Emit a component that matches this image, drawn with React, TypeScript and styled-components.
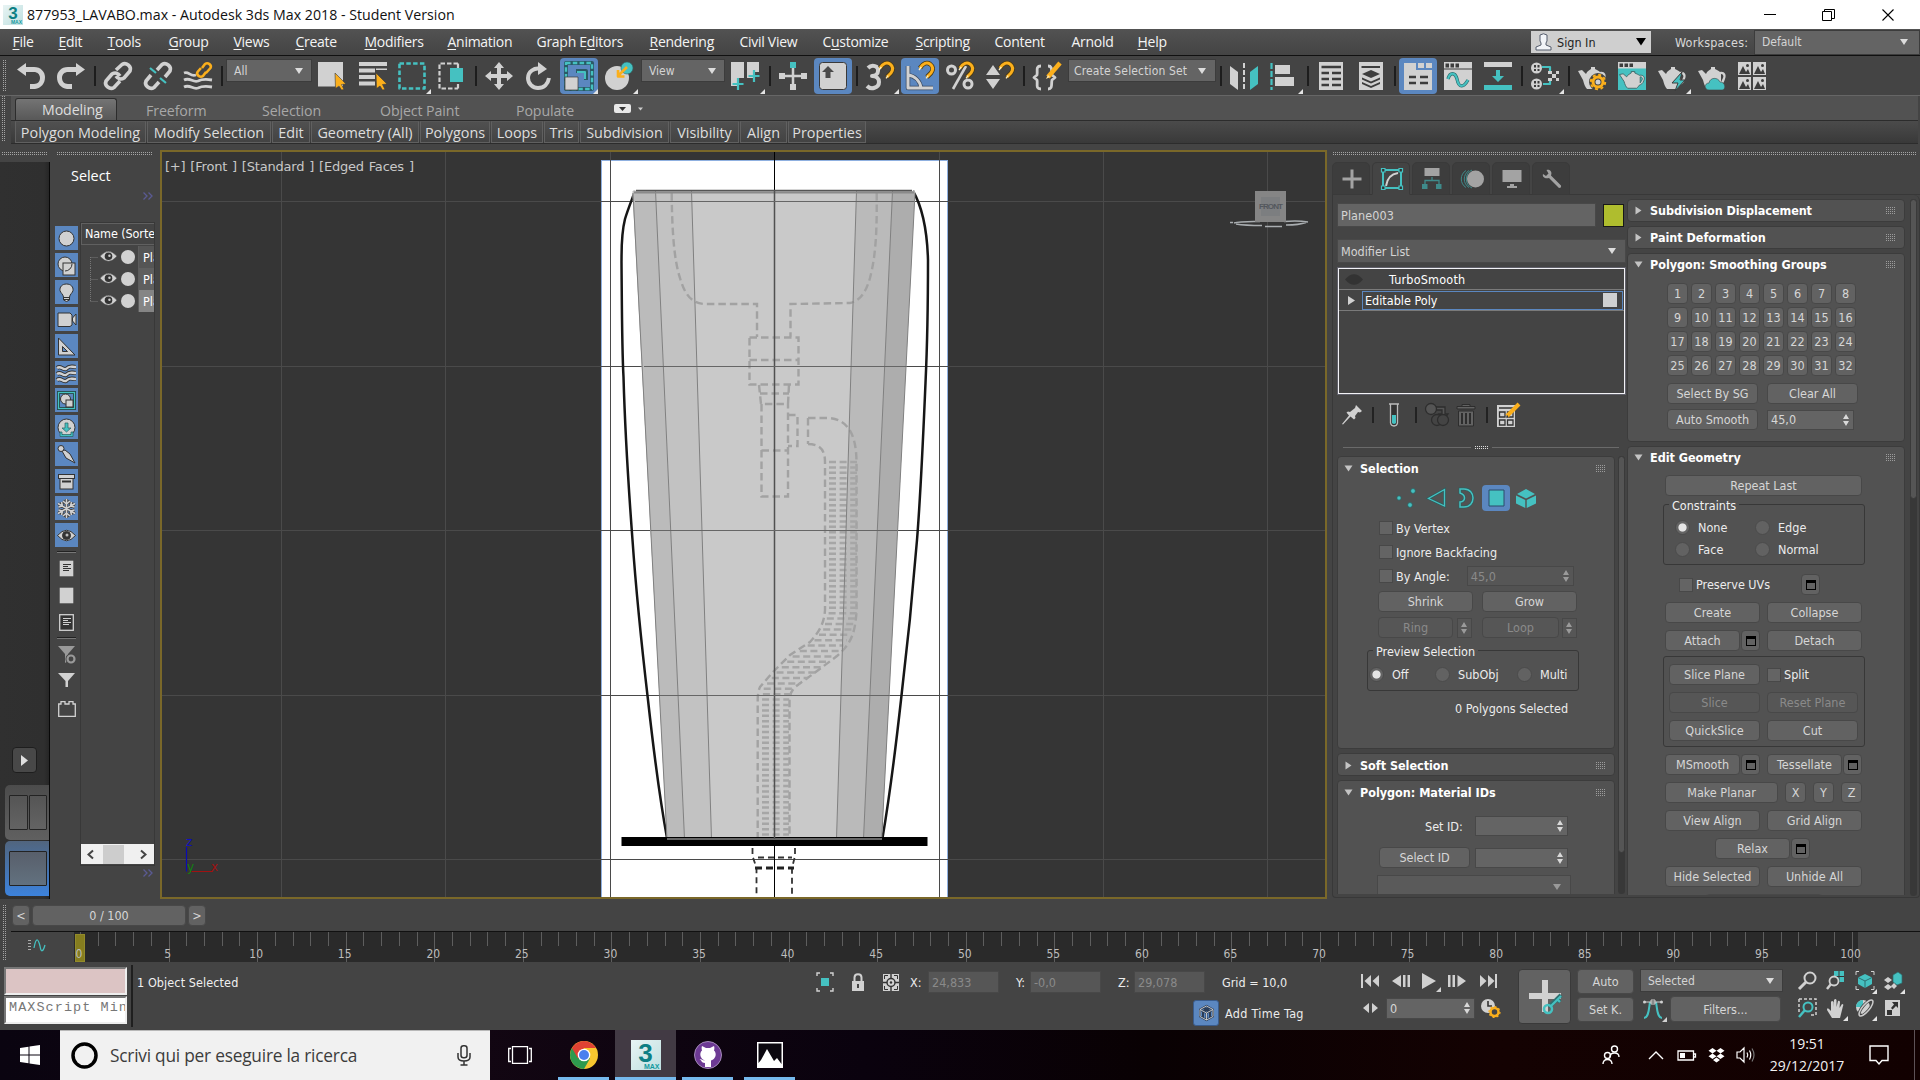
import React from "react";
import styled, { createGlobalStyle, css } from "styled-components";

const ui = `"DejaVu Sans Condensed", "DejaVu Sans", "Liberation Sans", sans-serif`;
const segoe = `"Open Sans", "Noto Sans", sans-serif`;
const light = "#d1d1d1";
const teal = "#45c1c1";
const orange = "#fbaf1c";
const blue = "#5b87c0";

const Global = createGlobalStyle`
  * { box-sizing: border-box; }
  html, body { margin: 0; padding: 0; background: #444; overflow: hidden; }
  body { font-family: ${ui}; font-stretch: condensed; font-size: 12.5px; color: #e6e6e6; }
`;

/* ---------- shared primitives ---------- */
const Window = styled.div`
  width: 1920px; height: 1080px; display: flex; flex-direction: column; background: #444; overflow: hidden;
`;
const Svg = styled.svg<{ $ml?: number; $mt?: number }>`
  display: block; flex: none; overflow: visible; margin-left: ${p => p.$ml ?? 0}px; margin-top: ${p => p.$mt ?? 0}px;
`;
const Text = styled.span<{ $w?: number; $ml?: number; $c?: string; $fs?: number; $ls?: number; $b?: boolean; $segoe?: boolean }>`
  flex: none; white-space: pre; display: block;
  width: ${p => (p.$w ? p.$w + "px" : "auto")};
  margin-left: ${p => p.$ml ?? 0}px;
  color: ${p => p.$c ?? "#ececec"};
  font-size: ${p => p.$fs ?? 12.5}px;
  letter-spacing: ${p => p.$ls ?? 0}px;
  font-weight: ${p => (p.$b ? 700 : 400)};
  ${p => p.$segoe && css`font-family: ${segoe}; font-stretch: normal;`}
`;
const Spacer = styled.div`flex: 1;`;
const Line = styled.div<{ $h: number; $mt?: number; $pl?: number; $top?: boolean }>`
  display: flex; align-items: ${p => (p.$top ? "flex-start" : "center")}; flex: none;
  height: ${p => p.$h}px; margin-top: ${p => p.$mt ?? 0}px; padding-left: ${p => p.$pl ?? 0}px;
`;
const Button = styled.div<{ $w: number; $h?: number; $ml?: number; $off?: boolean; $fs?: number }>`
  flex: none; display: flex; align-items: center; justify-content: center; white-space: pre;
  width: ${p => p.$w}px; height: ${p => p.$h ?? 21}px; margin-left: ${p => p.$ml ?? 0}px;
  border: 1px solid #484848; border-radius: 4px; font-size: ${p => p.$fs ?? 12.5}px;
  background: ${p => (p.$off ? "#565656" : "#626262")}; color: ${p => (p.$off ? "#8a8a8a" : "#d6d6d6")};
`;
const Field = styled.div<{ $w: number; $h?: number; $ml?: number; $off?: boolean }>`
  flex: none; display: flex; align-items: center; justify-content: space-between; white-space: pre;
  width: ${p => p.$w}px; height: ${p => p.$h ?? 20}px; margin-left: ${p => p.$ml ?? 0}px; padding: 0 4px 0 3px;
  border: 1px solid #484848; background: ${p => (p.$off ? "#565656" : "#646464")}; color: ${p => (p.$off ? "#8a8a8a" : "#d6d6d6")};
`;
const Drop = styled.div<{ $w: number; $h?: number; $ml?: number; $off?: boolean; $pr?: number; $fs?: number; $ls?: number }>`
  flex: none; display: flex; align-items: center; justify-content: space-between; white-space: pre;
  width: ${p => p.$w}px; height: ${p => p.$h ?? 23}px; margin-left: ${p => p.$ml ?? 0}px; padding: 0 ${p => p.$pr ?? 8}px 0 7px;
  border: 1px solid ${p => (p.$off ? "#484848" : "#3c3c3c")}; background: ${p => (p.$off ? "#5a5a5a" : "#646464")}; color: #d4d4d4;
  font-size: ${p => p.$fs ?? 12}px; letter-spacing: ${p => p.$ls ?? 0}px;
`;
const BarDrop = styled(Drop)`align-self: flex-start; margin-top: 3px;`;
const Check = styled.div<{ $ml?: number }>`
  flex: none; width: 14px; height: 14px; margin-left: ${p => p.$ml ?? 0}px; background: #646464; border: 1px solid #484848;
`;
const RadioDot = styled.div<{ $ml?: number; $on?: boolean }>`
  flex: none; width: 15px; height: 15px; border-radius: 50%; margin-left: ${p => p.$ml ?? 0}px;
  border: 1px solid #4b4b4b; background: ${p => (p.$on ? "radial-gradient(circle, #e4e4e4 0 3.6px, #646464 4.6px)" : "#626262")};
`;
const GroupBox = styled.div<{ $ml: number; $mt: number; $w: number; $h: number }>`
  flex: none; position: relative; margin: ${p => p.$mt}px 0 0 ${p => p.$ml}px; width: ${p => p.$w}px; height: ${p => p.$h}px;
  border: 1px solid #383838; border-radius: 3px;
`;
const Legend = styled.span`
  position: absolute; top: -7px; left: 5px; padding: 0 3px; background: #525252; line-height: 15px; white-space: pre; color: #f0f0f0;
`;

const Down = ({ c = "#dcdcdc", s = 8 }: { c?: string; s?: number }) => (
  <Svg width={s} height={s * 0.75} viewBox="0 0 8 6"><path d="M0 0H8L4 6Z" fill={c} /></Svg>
);
const Spin = ({ c = "#d8d8d8" }: { c?: string }) => (
  <Svg width="6" height="12" viewBox="0 0 6 12"><path d="M0 5L3 0L6 5ZM0 7H6L3 12Z" fill={c} /></Svg>
);
const Flyout = styled.i`
  position: absolute; right: -5px; bottom: -4px; width: 0; height: 0; border-left: 5px solid transparent; border-bottom: 5px solid #e4e4e4;
`;

/* ---------- title bar ---------- */
const TitleBar = styled.div`
  height: 29px; flex: none; background: #fff; display: flex; align-items: center; padding-left: 3px; color: #111;
`;
const TitleBarEnd = styled.div`margin-left: auto; display: flex; align-items: center; padding-right: 26px;`;
const Badge = styled.div<{ $s: number; $f: number }>`
  width: ${p => p.$s}px; height: ${p => p.$s}px; flex: none; position: relative; background: linear-gradient(135deg, #e8f4f4, #bfdfe0);
  color: #0d7f84; font: 700 ${p => p.$f}px/1 "Liberation Sans", sans-serif; text-align: center;
`;
const BadgeTag = styled.span<{ $f: number }>`
  position: absolute; right: 1px; bottom: 0; font-size: ${p => p.$f}px; line-height: 1; color: #129a9f;
`;

/* ---------- menu ---------- */
const MenuBar = styled.div`
  height: 27px; flex: none; display: flex; align-items: center; padding-left: 12.5px; background: linear-gradient(#525252, #444);
  border-bottom: 1px solid #111;
`;
const MenuItem = styled.div<{ $w: number; $ls?: number }>`
  flex: none; width: ${p => p.$w}px; white-space: pre; font-family: ${segoe}; font-stretch: normal; font-size: 14px; color: #f4f4f4; letter-spacing: ${p => p.$ls ?? -0.28}px;
  padding-bottom: 1px;
  u { text-underline-offset: 2px; text-decoration-thickness: 1px; }
`;
const SignIn = styled.div`
  flex: none; width: 120px; height: 22px; background: #cfcfcf; display: flex; align-items: center; padding: 0 5px 0 4px; color: #222;
`;
const menu: [string, string, string, number][] = [
  ["", "F", "ile", 46], ["", "E", "dit", 49], ["", "T", "ools", 61], ["", "G", "roup", 65], ["", "V", "iews", 62], ["", "C", "reate", 69],
  ["", "M", "odifiers", 83], ["", "A", "nimation", 89], ["Graph E", "d", "itors", 113], ["", "R", "endering", 90], ["Civil View", "", "", 83],
  ["C", "u", "stomize", 93], ["", "S", "cripting", 79], ["Content", "", "", 77], ["Arnold", "", "", 66], ["", "H", "elp", 60],
];

/* ---------- main toolbar ---------- */
const ToolBar = styled.div`
  height: 40px; flex: none; display: flex; align-items: center; border-bottom: 1px solid #666; position: relative; padding-left: 3px;
`;
const Grip = styled.div<{ $w: number; $h: number; $ml?: number; $mt?: number }>`
  flex: none; width: ${p => p.$w}px; height: ${p => p.$h}px; margin: ${p => p.$mt ?? 0}px 0 0 ${p => p.$ml ?? 0}px;
  ${p => {
    const flat = p.$w > p.$h;
    const g = `repeating-linear-gradient(${flat ? "90deg" : "180deg"}, #a4a4a4 0 1px, transparent 1px 2px) no-repeat`;
    return flat
      ? css`background: ${g} 0 2px / 100% 1px, ${g} 0 4px / 100% 1px;`
      : css`background: ${g} 0 0 / 1px 100%, ${g} 2px 0 / 1px 100%;`;
  }}
`;
const Tool = styled.div<{ $w?: number; $ml: number; $on?: boolean }>`
  position: relative; z-index: 0; flex: none; width: ${p => p.$w ?? 28}px; height: 28px; margin-left: ${p => p.$ml}px;
  ${p => p.$on && css`&::before { content: ""; position: absolute; inset: -4px -5px; background: ${blue}; border-radius: 4px; z-index: -1; }`}
`;
const Sep = styled.div<{ $ml: number }>`flex: none; width: 2px; height: 20px; background: #1d1d1d; margin-left: ${p => p.$ml}px;`;

const Icon28 = ({ children, w = 28 }: { children: React.ReactNode; w?: number }) => (
  <Svg width={w} height="28" viewBox={`0 0 ${w} 28`} fill="none" strokeLinejoin="round">{children}</Svg>
);
const Cursor = () => <path d="M17 11L28 22L23.5 22.5L26 27.5L23.5 28L21 24L17.5 26.5Z" fill={orange} stroke="#3a3a3a" strokeWidth="0.6" />;
const Magnet = ({ x = 13, y = 0 }: { x?: number; y?: number }) => (
  <g transform={`translate(${x} ${y})`}>
    <path d="M1 6C4 1 8 0 11 2C15 5 14 8 12 11L8 15" stroke="#4a3a14" strokeWidth="4.600" />
    <path d="M1 6C4 1 8 0 11 2C15 5 14 8 12 11L8 15" stroke={orange} strokeWidth="3" />
    <path d="M0 8L2.3 5M7 16.3L9.2 13.6" stroke="#fff0c0" strokeWidth="1.3" />
  </g>
);
const Teapot = () => (
  <path d="M0 6L4 5L8 9C9 6 12 5 13 4V2H17V4C19 5 21 6 22 7C26 6 29 9 27 14C26 18 24 19 22 20C21 22 20 23 19 24H9C7 22 6 19 5 15Z M23 9C25 9 26 11 25 13C24 15 23.500 16 23 17Z" fill={light} fillRule="evenodd" />
);
const chain = (a: string, b: string) => (
  <g fill="none" strokeWidth="3.6"><path d={a} stroke={light} /><path d={b} stroke={light} /></g>
);

const MainTools = () => (
  <ToolBar>
    <Grip $w={3} $h={32} />
    <Tool $ml={11}><Icon28><path d="M0 7.500L9 1V5H17C24 5 28 10 28 15C28 22 24 26 18 27H13V22H17C21 22 23 19 23 16C23 12 20 10 17 10H9V14Z" fill={light} /></Icon28></Tool>
    <Tool $ml={12}><Icon28><path d="M28 7.500L19 1V5H11C4 5 0 10 0 15C0 22 4 26 10 27H15V22H11C7 22 5 19 5 16C5 12 8 10 11 10H19V14Z" fill={light} /></Icon28></Tool>
    <Sep $ml={9} />
    <Tool $ml={8}><Icon28>{chain("M12 8L18 2.500C22 0 28 4 26 9L20 16C17 18 14 17 12 14", "M16 19L10 25.500C6 28 0 24 2 19L8 12C11 10 14 11 16 14")}</Icon28></Tool>
    <Tool $ml={12}><Icon28>{chain("M13 8L18 2.500C22 0 28 4 26 9L21 15", "M15 20L10 25.500C6 28 0 24 2 19L7 13")}<path d="M6 6L12 11M16 16L22 21" stroke={teal} strokeWidth="2.200" /></Icon28></Tool>
    <Tool $ml={12}><Icon28>
      <path d="M0 11C5 9 6 15 12 13M0 18C6 15 9 21 14 19C18 17 22 17 28 18M0 25C6 22 9 28 14 26C18 24 22 24 28 25" stroke={light} strokeWidth="2.800" />
      <path d="M18 6L21 2C24 0 28 3 26.500 6L22 11M22 10L19 14C16 16 12 13 13.500 10L17 6" stroke={orange} strokeWidth="2.600" />
    </Icon28></Tool>
    <Sep $ml={9} />
    <BarDrop $w={86} $ml={3}>All<Down /></BarDrop>
    <Tool $ml={6}><Icon28><rect width="25" height="24.500" fill={light} /><Cursor /></Icon28></Tool>
    <Tool $ml={13}><Icon28><path d="M0 0H28V4H0ZM0 6.500H16V10.500H0ZM0 13H16V17H0ZM0 19.500H16V23.500H0ZM17 6.500H28V8H17Z" fill={light} /><Cursor /></Icon28></Tool>
    <Tool $ml={11} $w={28}><Icon28><rect x="1.500" y="1.500" width="25" height="25" stroke={teal} strokeWidth="2.600" strokeDasharray="4.500 2.300" /></Icon28><Flyout /></Tool>
    <Tool $ml={12} $w={28}><Icon28><path d="M20 1.500H1.500V26.500H20M20 1.500V6M20 22V26.500" stroke={light} strokeWidth="2.200" strokeDasharray="4.500 2" /><rect x="12" y="6" width="13" height="14" fill={teal} /></Icon28></Tool>
    <Sep $ml={9} />
    <Tool $ml={8}><Icon28><path d="M14 0L19 6H16V12H22V9L28 14L22 19V16H16V22H19L14 28L9 22H12V16H6V19L0 14L6 9V12H12V6H9Z" fill={light} /></Icon28></Tool>
    <Tool $ml={12}><Icon28><path d="M16 7C9 5 3 10 3 16C3 22 8 26 13 26C19 26 23 22 24 16" stroke={light} strokeWidth="4" /><path d="M13 0L22 7L13 13Z" fill={light} /></Icon28></Tool>
    <Tool $ml={12} $w={28} $on><Icon28>
      <rect x="1" y="1" width="26" height="26" stroke="#2b5a66" strokeWidth="4" />
      <rect x="1" y="1" width="26" height="26" stroke={teal} strokeWidth="2.400" strokeDasharray="4.500 2.300" />
      <path d="M11 9H21V18" stroke="#2b5a66" strokeWidth="4" /><path d="M12 10H20V17" stroke={teal} strokeWidth="2" />
      <rect x="0" y="15" width="13" height="13" fill={light} stroke="#3a3a3a" strokeWidth=".7" />
    </Icon28><Flyout /></Tool>
    <Tool $ml={12}><Icon28><circle cx="12" cy="16" r="12" fill={light} /><circle cx="22" cy="6" r="6" fill={teal} stroke="#2e6666" strokeWidth=".6" /><path d="M22 5L14 13M13 8V14.500H19.500" stroke={orange} strokeWidth="2.600" /></Icon28><Flyout /></Tool>
    <BarDrop $w={84} $ml={8}>View<Down /></BarDrop>
    <Tool $ml={6} $w={29}><Icon28><path d="M0 0H13V16H8V24H0ZM16 0H28V10H24V16H16Z" fill={light} /><path d="M7 16V28M1.500 22H12.500M23 8V20M17.500 14H28.500" stroke={teal} strokeWidth="2.200" /></Icon28><Flyout /></Tool>
    <Sep $ml={9} />
    <Tool $ml={8}><Icon28><path d="M14 4V26M2 14H26" stroke={light} strokeWidth="2.500" /><rect x="11" y="0" width="6" height="6" fill={teal} /><path d="M0 11H6V17H0ZM22 11H28V17H22ZM11 22H17V28H11Z" fill={light} /></Icon28></Tool>
    <Tool $ml={12} $on><Icon28><rect x="0.500" y="0.500" width="27" height="27" rx="3" fill={light} stroke="#3a3a3a" /><path d="M9 4L15 10H11.500V16H6.500V10H3Z" fill="#4a4a4a" /></Icon28></Tool>
    <Sep $ml={9} />
    <Tool $ml={8}><Icon28><path d="M2 6C6 2 13 4 12 9C12 12 9 14 6 14C10 14 13 16 13 20C13 26 5 28 1 24" stroke={light} strokeWidth="4" /><Magnet /></Icon28><Flyout /></Tool>
    <Tool $ml={12} $on><Icon28><path d="M2 4V26H27M2 13C9 14 14 19 15 26M2 13" stroke="#3a4a60" strokeWidth="4.500" /><path d="M2 4V26H27M2 13C9 14 14 19 15 26" stroke={light} strokeWidth="3" /><Magnet /></Icon28></Tool>
    <Tool $ml={12}><Icon28><circle cx="5.500" cy="8" r="4" stroke={light} strokeWidth="3" /><circle cx="22" cy="22" r="4" stroke={light} strokeWidth="3" /><path d="M20 4L7 27" stroke={light} strokeWidth="2.600" /><Magnet /></Icon28></Tool>
    <Tool $ml={12}><Icon28><path d="M0 13L7 3L14 13ZM0 17H14L7 27Z" fill={light} /><Magnet /></Icon28></Tool>
    <Sep $ml={9} />
    <Tool $ml={8}><Icon28><path d="M8 4C2 4 5 9 4 13L1 15.500L4 18C5 22 2 27 8 27M15 4C20 4 18 9 19 13L22 15.500L19 18C18 22 20 27 15 27" stroke={light} strokeWidth="2.800" /><path d="M15 15L27 1" stroke={orange} strokeWidth="4.500" /><path d="M13 17L17 15L15 13Z" fill="#ffe2a0" /></Icon28></Tool>
    <BarDrop $w={148} $ml={7} $pr={9} $ls={0.15}><Text $fs={12} $ml={-2} $c="#d4d4d4" $ls={0.15}>Create Selection Set</Text><Down /></BarDrop>
    <Sep $ml={4} />
    <Tool $ml={8}><Icon28><path d="M0 4L8 10V28L0 22Z" fill={light} /><path d="M28 4L20 10V28L28 22Z" fill={teal} /><path d="M14 1V28" stroke={light} strokeWidth="2" strokeDasharray="5 2" /></Icon28></Tool>
    <Tool $ml={12}><Icon28><path d="M1.500 1V28" stroke={teal} strokeWidth="2.200" strokeDasharray="6 2" /><path d="M5 3H20V12H5ZM5 15H24V24H5Z" fill={light} /></Icon28><Flyout /></Tool>
    <Sep $ml={9} />
    <Tool $ml={9}><Icon28><path d="M1 0H25V28H1Z" fill={light} /><path d="M3.500 5H23M3.500 11H11M14 11H23M3.500 17H11M14 17H23M3.500 23H11M14 23H23" stroke="#3c3c3c" strokeWidth="2.500" /></Icon28></Tool>
    <Tool $ml={12}><Icon28><path d="M1 0H25V28H1Z" fill={light} /><path d="M3.500 5H22" stroke="#3c3c3c" strokeWidth="2" /><path d="M13 8L22 12L13 16L4 12ZM4 15.500L13 19.500L22 15.500V17.500L13 21.500L4 17.500ZM4 20L13 24L22 20V22L13 26L4 22Z" fill="#3c3c3c" /></Icon28></Tool>
    <Sep $ml={8} />
    <Tool $ml={8} $on><Icon28><path d="M0 1H12V8H28V28H0Z" fill={light} /><path d="M14 1H20V6H14ZM22 1H28V6H22Z" fill={light} /><path d="M5 15H12M16 15H24M5 21H12M16 21H24" stroke="#3c3c3c" strokeWidth="2.500" /></Icon28></Tool>
    <Tool $ml={12}><Icon28><path d="M0 0H28V28H0Z" fill={light} /><path d="M1.500 1.500H5V5.500H1.500ZM6.500 1.500H10V5.500H6.500ZM11.500 1.500H15V5.500H11.500Z" fill="#3c3c3c" /><path d="M0 7H28" stroke="#3c3c3c" /><path d="M4 17C6 10 11 10 13 17C15 27 20 25 24 18" stroke="#2d6f70" strokeWidth="3.400" /><path d="M4 17C6 10 11 10 13 17C15 27 20 25 24 18" stroke={teal} strokeWidth="2" /></Icon28></Tool>
    <Tool $ml={12}><Icon28><path d="M0 0H28V5H0Z" fill={light} /><path d="M0 23H28V28H0ZM12 8H16V14H20L14 20L8 14H12Z" fill={teal} /></Icon28></Tool>
    <Sep $ml={9} />
    <Tool $ml={8}><Icon28><path d="M11 5H19V10M12 22H19V17" stroke={teal} strokeWidth="2.200" /><circle cx="5.500" cy="6" r="5.500" fill={light} /><circle cx="5.500" cy="22" r="5.500" fill={light} /><path d="M3 3H5V5.500H3ZM6.500 3H8.500V5.500H6.500ZM3 7H5V9H3ZM6.500 7H8.500V9H6.500ZM3 19H5V21.500H3ZM6.500 19H8.500V21.500H6.500ZM3 23H5V25H3ZM6.500 23H8.500V25H6.500Z" fill="#3c3c3c" /><path d="M17 9H21V12H25V9H28V12H25V16H28V19H25V16H21V19H17V16H21V12H17Z" fill={light} /></Icon28><Flyout /></Tool>
    <Sep $ml={9} />
    <Tool $ml={8}><Icon28><g transform="translate(0 3)"><Teapot /></g><circle cx="20" cy="20" r="5.500" fill="#444" stroke="#444" strokeWidth="7" /><circle cx="20" cy="20" r="5" stroke={orange} strokeWidth="3" /><circle cx="20" cy="20" r="7.200" stroke={orange} strokeWidth="2" strokeDasharray="3 2.650" /><circle cx="20" cy="20" r="2.500" fill={light} /></Icon28></Tool>
    <Tool $ml={12}><Icon28><path d="M0 0H28V28H0Z" fill={teal} /><path d="M0 0H28V6.500H0Z" fill={light} /><path d="M1.500 1.500H5V5H1.500ZM6.500 1.500H10V5H6.500ZM11.500 1.500H15V5H11.500Z" fill="#3c3c3c" /><g transform="translate(1.500 8) scale(.9 .76)" stroke="#35605f"><Teapot /></g></Icon28></Tool>
    <Tool $ml={12}><Icon28><g transform="translate(0 3)"><Teapot /></g><path d="M24 10L14 21H20L17 29L27 18H22Z" fill={teal} stroke="#3c3c3c" /></Icon28><Flyout /></Tool>
    <Tool $ml={12}><Icon28><g transform="translate(0 3)"><Teapot /></g><path d="M11 28C6 28 6 21 11 21C12 15 20 15 22 20C28 20 28 28 24 28Z" fill={teal} stroke="#444" strokeWidth=".6" /></Icon28></Tool>
    <Tool $ml={12}><Icon28>{[[0, 0], [15, 0], [0, 15], [15, 15]].map(([x, y]) => <g key={`${x}-${y}`} transform={`translate(${x} ${y})`}><path d="M0 0H13V13H0Z" fill={light} /><path d="M1 12L5 4L8 10L10 7L12 12Z" fill="#3c3c3c" /><circle cx="9.500" cy="3.500" r="1.500" fill="#3c3c3c" /></g>)}</Icon28></Tool>
  </ToolBar>
);

/* ---------- ribbon ---------- */
const Ribbon = styled.div`
  height: 48px; flex: none; display: flex; padding-left: 2px; background: #444;
`;
const RibbonBody = styled.div`flex: 1; margin-left: 6px; display: flex; flex-direction: column; padding-right: 2px;`;
const TabStrip = styled.div`height: 25px; display: flex; align-items: center; background: #525252; border-bottom: 1px solid #2c2c2c; padding-left: 4px;`;
const RibbonTab = styled.div<{ $w: number; $on?: boolean; $pl: number }>`
  flex: none; width: ${p => p.$w}px; height: ${p => (p.$on ? 22 : 20)}px; padding-left: ${p => p.$pl}px; display: flex; align-items: center; align-self: flex-end;
  font: 14.2px ${segoe}; letter-spacing: -0.1px; white-space: pre;
  color: ${p => (p.$on ? "#dedede" : "#a8a8a8")};
  ${p => p.$on && css`background: linear-gradient(#747474, #585858); border: 1px solid #2c2c2c; border-bottom: 0; border-radius: 3px 3px 0 0;`}
`;
const RibbonRow = styled.div`height: 23px; display: flex; background: linear-gradient(#4b4b4b, #393939); border-bottom: 1px solid #2c2c2c; padding-left: 4px;`;
const RibbonBtn = styled.div<{ $w: number }>`
  flex: none; width: ${p => p.$w - 1}px; margin-right: 1px; height: 22px; display: flex; align-items: center; justify-content: center; white-space: pre;
  font: 14.4px ${segoe}; letter-spacing: -0.02px; color: #dedede; border: 1px solid #606060; border-top-color: #565656; background: linear-gradient(#505050, #434343);
`;
const ribbonRow: [string, number][] = [["Polygon Modeling", 132], ["Modify Selection", 125], ["Edit", 39], ["Geometry (All)", 109], ["Polygons", 71], ["Loops", 53], ["Tris", 36], ["Subdivision", 90], ["Visibility", 70], ["Align", 48], ["Properties", 79]];

/* ---------- work area ---------- */
const WorkGap = styled.div`height: 6px; flex: none;`;
const Work = styled.div`height: 755px; flex: none; display: flex;`;
const LeftDock = styled.div`width: 50px; flex: none; display: flex; flex-direction: column;`;
const Strip = styled.div`
  flex: 1; margin-top: 6px; margin-bottom: 6px; background: linear-gradient(90deg, #303030, #2f2f2f 90%, #262626); border-right: 1px solid #080808;
  display: flex; flex-direction: column; padding-top: 585px;
`;
const PlayTab = styled.div`width: 25px; height: 26px; flex: none; margin-left: 12px; border: 1px solid #1e1e1e; border-radius: 4px; background: #484848; display: flex; align-items: center; justify-content: center;`;
const LayoutTab = styled.div<{ $on?: boolean; $mt: number }>`
  flex: none; margin: ${p => p.$mt}px 0 0 5px; height: 55px; border-radius: 5px 0 0 5px; padding: 10px 2px 10px 4px; display: flex; gap: 1px;
  background: ${p => (p.$on ? "linear-gradient(#51657e, #3c82dc)" : "linear-gradient(#4c4c4c, #606060)")};
`;
const Cell = styled.div<{ $on?: boolean }>`flex: 1; border: 1px solid #232323; border-radius: 1px; background: ${p => (p.$on ? "linear-gradient(#585f6b,#62717f)" : "linear-gradient(#555,#636363)")};`;

const Explorer = styled.div`width: 110px; flex: none; display: flex; flex-direction: column; padding: 0 5px;`;
const ExpBody = styled.div`display: flex; margin-top: 22px; height: 644px; flex: none;`;
const ExpIcons = styled.div`width: 23px; flex: none; display: flex; flex-direction: column; align-items: center; padding-top: 4px;`;
const ExpIcon = styled.div<{ $on?: boolean }>`
  width: 23px; height: 24px; margin-bottom: 3px; flex: none; display: flex; align-items: center; justify-content: center; background: ${p => (p.$on ? blue : "transparent")};
`;
const ExpRule = styled.div<{ $mt: number; $mb: number }>`width: 19px; height: 2px; margin: ${p => p.$mt}px 0 ${p => p.$mb}px; background: #777; border-top: 1px solid #222; flex: none;`;
const ExpList = styled.div`width: 75px; margin-left: 2px; border: 1px solid #383838; display: flex; flex-direction: column; overflow: hidden;`;
const ExpHead = styled.div`height: 22px; margin-bottom: 1px; border: 1px solid #606060; border-right: 0; padding: 0 0 1px 3px; display: flex; align-items: center; overflow: hidden;`;
const ExpRow = styled.div`height: 22px; display: flex; align-items: center; flex: none;`;
const ExpName = styled.div<{ $bg: string }>`width: 16px; height: 22px; margin-left: 3px; padding: 4px 0 0 4px; background: ${p => p.$bg}; border-left: 1px solid #5c5c5c; overflow: hidden; flex: none; color: #fff;`;
const HScroll = styled.div`margin: auto 0 1px; height: 20px; background: #f0f0f0; display: flex; align-items: center; justify-content: space-between; padding: 0 7px 0 6px;`;
const Thumb = styled.div`width: 21px; height: 19px; background: #cdcdcd; margin-right: 8px;`;
const Chev = () => <Svg width="10" height="8" viewBox="0 0 10 8"><path d="M0.500 0.500L4 4L0.500 7.500M5.500 0.500L9 4L5.500 7.500" stroke="#5a5a93" fill="none" strokeWidth="1.300" /></Svg>;
const Eye = ({ w = 18 }: { w?: number }) => (
  <Svg width={w} height={w * 0.62} $mt={-2} viewBox="0 0 18 11"><path d="M0 5.500Q9 -5 18 5.500Q9 16 0 5.500Z" fill={light} stroke="#333" strokeWidth=".5" /><circle cx="9" cy="5.500" r="4" fill="#333" /><circle cx="10" cy="5" r="1.300" fill="#ccc" /></Svg>
);
const waves = "M0 4C4 1 5 6 9 5C13 1 14 3 19 3M0 10C4 7 5 12 9 11C13 7 14 9 19 9M0 16C4 13 5 18 9 17C13 13 14 15 19 15";
const I19 = ({ children }: { children: React.ReactNode }) => <Svg width="19" height="19" viewBox="0 0 19 19" fill={light} stroke="#333" strokeWidth="1">{children}</Svg>;
const flake = "M9.500 0V19M1 4.500L18 14.500M1 14.500L18 4.500M6 2L9.500 5L13 2M6 17L9.500 14L13 17M1.500 8L5.500 7L4.500 3M17.500 8L13.500 7L14.500 3M1.500 11L5.500 12L4.500 16M17.500 11L13.500 12L14.500 16";
const filterIcons = [
  <circle cx="9.500" cy="9.500" r="7.500" />,
  <g><circle cx="8" cy="8" r="7" /><rect x="6" y="7" width="12" height="12" /><path d="M15 8A7 7 0 0 1 8 15" fill="none" /></g>,
  <path d="M9.500 1C5 1 2.500 4 3 7.500C3.500 10 6 11 6.500 14V17L9.500 18.500L12.500 17V14C13 11 15.500 10 16 7.500C16.500 4 14 1 9.500 1ZM6.500 14.500H12.500M7 16.500H12" />,
  <path d="M1 3H13L15 5V15L13 16.500H1ZM15.500 8L19 4V15L15.500 11Z" />,
  <path d="M1.500 1L18 18H1.500ZM5.500 9.500V14.500H10.500Z" fillRule="evenodd" />,
  <g fill="none"><path d={waves} strokeWidth="4.200" /><path d={waves} stroke={light} strokeWidth="2.400" /></g>,
  <g><rect x="1.500" y="1.500" width="16" height="16" fill={blue} stroke="#254a4a" strokeWidth="3" /><rect x="1.500" y="1.500" width="16" height="16" fill="none" stroke={teal} strokeWidth="1.200" /><circle cx="8.500" cy="8" r="5" /><rect x="9" y="9" width="7" height="7" /></g>,
  <g><circle cx="9.500" cy="9.500" r="8.500" /><path d="M8 5H11V10H14L9.500 14L5 10H8ZM3 14H5V16.500H14V14H16V18.500H3Z" fill={teal} stroke="#2a5f60" strokeWidth=".7" /></g>,
  <g><path d="M5 6L8 5L13 9L18 18L9 13Z" /><circle cx="4" cy="3.500" r="3" /></g>,
  <g><rect x="3" y="6" width="13" height="11" /><rect x="1.500" y="2.500" width="16" height="4" /><path d="M5 9.500H14" strokeWidth="2" /></g>,
  <g fill="none"><path d={flake} stroke="#444" strokeWidth="3" /><path d={flake} stroke={light} strokeWidth="1.500" /></g>,
  <g transform="translate(0.500 4)"><path d="M0 5.500Q9 -5 18 5.500Q9 16 0 5.500Z" /><circle cx="9" cy="5.500" r="4" fill="#333" /><circle cx="9.500" cy="5" r="1.500" fill="#bbb" stroke="none" /></g>,
];

/* ---------- viewport ---------- */
const Viewport = styled.div`
  width: 1167px; height: 749px; flex: none; border: 2px solid #7a6829; background: #353535; position: relative; overflow: hidden;
`;
const VpLabel = styled.div`position: absolute; left: 3px; top: 7px; font: 13px "DejaVu Sans", sans-serif; color: #c8c8c8; white-space: pre; letter-spacing: -0.2px; word-spacing: 1px;`;
const AxisLetter = styled.span<{ $x: number; $y: number; $c: string }>`position: absolute; left: ${p => p.$x}px; top: ${p => p.$y}px; color: ${p => p.$c}; font: 12px/12px "DejaVu Sans", sans-serif;`;
const CubeText = styled.span`position: absolute; left: 1097px; top: 49px; font: 700 8px/12px "Liberation Sans", sans-serif; color: #53575d; letter-spacing: -0.9px;`;

const plumbing = "M671.700 193C672 230 674 260 680 278C684 292 690 303 704 304H757V337M876.700 193C877 230 876 255 870 278C866 292 860 301 850 303L790.500 304V337M749.500 337.500H798.500V384.500H749.500ZM749.500 360H798.500M759 385L761 404H788L789 385M760 393.500H789M761.500 404V496.500H788V404M761.500 450.500H788M788 415H797.500V446H788M808 418V444M808 418H828C845 419 856 430 856.500 461V612C855 632 852 643 837 656L813 674L795 687Q789.500 693 789.500 700V838M808 444C818 444 825 448 825 462V610C824 625 818 633 810 642L790 655L773 672L760 687Q757.700 692 757.700 700V838";
/* the flexible hose is ribbed: each rib is a run of short level dashes between its two outlines */
const hoseEdges: [number, number, number][] = [
  [461, 825, 856], [612, 825, 856], [630, 819, 851], [642, 809, 845], [655, 790, 836], [672, 773, 815], [687, 760, 794], [700, 758, 788], [838, 758, 788],
];
const edgesAt = (y: number): [number, number] => {
  const i = Math.max(1, hoseEdges.findIndex(e => e[0] >= y));
  const [y0, a0, b0] = hoseEdges[i - 1];
  const [y1, a1, b1] = hoseEdges[i];
  const t = (y - y0) / (y1 - y0);
  return [a0 + (a1 - a0) * t, b0 + (b1 - b0) * t];
};
const ribs = Array.from({ length: 70 }, (_, i) => 462 + i * 5.4).filter(y => y < 836).map(y => {
  const [a, b] = edgesAt(y);
  return `M${(a + 4).toFixed(1)} ${y.toFixed(1)}H${(b + 1).toFixed(1)}`;
}).join("");

const Scene = () => (
  <Svg width="1164" height="745" viewBox="162 152 1164 745" fill="none">
    <rect x="601.500" y="160.500" width="346" height="740" fill="#fff" stroke="#8fb0e0" />
    <path d="M281.500 152V897M445.500 152V897M939.500 152V897M1103.500 152V897M1267.500 152V897M610.500 152V897M162 201.500H1326M162 366.500H1326M162 530.500H1326M162 695.500H1326M162 859.500H1326" stroke="#4a4a4a" />
    <path d="M774.500 152V897" stroke="#000" />
    <path d="M635 191C631 202 628 209 625 219C621 235 621.700 250 621.500 262C622 320 622 350 623.500 377C625 430 628 480 632.500 540C636 590 641 640 648 700C653 745 660 800 667 838" stroke="#161616" strokeWidth="2.500" />
    <path d="M913 191C920 203 927 225 928 260C928 300 927.500 340 925.500 383C923 440 921 490 917 540C913 590 907 650 901 700C896 745 889 800 882.500 838" stroke="#161616" strokeWidth="2.500" />
    <path d="M632.500 193L635 190.500H912L915 193L881.700 839H667Z" fill="#c9c9c9" />
    <path d="M632.500 191H655.500L684.500 839H667Z" fill="#bbb" /><path d="M655.500 191H691.500L711.500 839H684.500Z" fill="#c2c2c2" />
    <path d="M856.500 191H892.500L863.500 839H836.500Z" fill="#bababa" /><path d="M892.500 191H915L881.700 839H863.500Z" fill="#adadad" />
    <path d={plumbing} stroke="#a2a2a2" strokeWidth="2.400" strokeDasharray="7.500 4" />
    <path d={ribs} stroke="#a6a6a6" strokeWidth="2.500" strokeDasharray="7 3.600" />
    <path d="M633 193L667 839M655.500 191L684.500 839M691.500 191L711.500 839M856.500 191L836.500 839M892.500 191L863.500 839M915 193L881.700 839" stroke="#808080" />
    <path d="M634 192.500H914" stroke="#8a8a8a" strokeWidth="2" /><path d="M636 190.500H912" stroke="#555" strokeWidth="1.600" />
    <rect x="621.500" y="837" width="306" height="9" fill="#000" /><path d="M667 839H882" stroke="#888" strokeWidth="1.500" />
    <path d="M774.500 191V839" stroke="#505050" strokeWidth="1.500" />
    <path d="M635 201.500H914M644 366.500H906M651 530.500H897M659 695.500H889" stroke="#666" />
    <path d="M752.500 848V856L756.500 868V897M795 848V856L792 868V897M758 857.500H792" stroke="#333" strokeWidth="1.800" strokeDasharray="6 4" />
    <path d="M755 868H794" stroke="#222" strokeWidth="3" strokeDasharray="7 4" />
    <path d="M1230 222.500H1233M1234 223C1240 221 1255 221.500 1260 221.500M1236 224C1245 225.500 1254 225.500 1262 225.500M1265 226.500H1282M1286 225C1295 225 1302 224 1306 222.500M1284 221.500C1290 221 1302 221 1308 222" stroke="#a9adb0" strokeWidth="1.500" />
    <rect x="1255" y="191" width="31" height="31" fill="#858585" /><rect x="1261" y="197" width="19" height="19" fill="#7c7e80" />
    <path d="M186.500 871.500V847" stroke="#0a0ab4" strokeWidth="1.200" /><path d="M190 871.500H213" stroke="#a01212" />
  </Svg>
);

/* ---------- command panel ---------- */
const Panel = styled.div`flex: 1; display: flex; flex-direction: column; padding-left: 5px;`;
const PanelTabs = styled.div`display: flex; height: 33px; margin-top: 6px; gap: 2px; flex: none; border-bottom: 1px solid #383838;`;
const PanelTab = styled.div<{ $on?: boolean }>`
  flex: none; width: 38px; height: 33px; border-radius: 5px 5px 0 0; border: 1px solid #3a3a3a; background: ${p => (p.$on ? "#444" : "#3d3d3d")};
  display: flex; align-items: center; justify-content: center; padding-left: 1px;
  ${p => p.$on && css`border-bottom-color: #444;`}
`;
const Columns = styled.div`display: flex; height: 703px; flex: none; border: 1px solid #383838; border-top: 0; border-radius: 0 6px 4px 4px; padding-bottom: 2px;`;
const ColLeft = styled.div`width: 294px; flex: none; display: flex; flex-direction: column; padding-left: 4px;`;
const ColRight = styled.div`width: 278px; flex: none; display: flex; flex-direction: column; padding-top: 4px; overflow: hidden;`;
const Rollup = styled.div<{ $h: number; $mb?: number }>`
  flex: none; height: ${p => p.$h}px; width: 278px; margin-bottom: ${p => p.$mb ?? 4}px; background: #525252; border: 1px solid #3c3c3c; border-radius: 4px; display: flex; flex-direction: column; overflow: hidden;
`;
const RollHead = styled.div<{ $up?: boolean }>`height: 22px; flex: none; display: flex; align-items: center; padding: 0 9px ${p => (p.$up ? 2 : 0)}px 6px;`;
const DotRight = styled.div`margin-left: auto;`;
const DotGrid = ({ w, rows, c }: { w: number; rows: number; c: string }) => (
  <Svg width={w} height={rows * 2 - 1} viewBox={`0 0 ${w} ${rows * 2 - 1}`} shapeRendering="crispEdges">
    {Array.from({ length: rows }, (_, i) => <path key={i} d={`M0 ${i * 2 + 0.5}H${w}`} stroke={c} strokeDasharray="1 1" />)}
  </Svg>
);
const Head = ({ t, open, up, ls = -0.02 }: { t: string; open?: boolean; up?: boolean; ls?: number }) => (
  <RollHead $up={up}>
    <Svg width="9" height="9" viewBox="0 0 9 9"><path d={open ? "M0.500 1.500H8.500L4.500 7.500Z" : "M1.500 0.500V8.500L7.500 4.500Z"} fill="#c4c4c4" /></Svg>
    <Text $b $ml={7} $ls={ls} $c="#fff">{t}</Text><DotRight><DotGrid w={9} rows={4} c="#9c9c9c" /></DotRight>
  </RollHead>
);
const VBar = styled.div<{ $mt: number; $h: number; $ml: number }>`width: 7px; margin: ${p => p.$mt}px 0 0 ${p => p.$ml}px; height: ${p => p.$h}px; background: #383838; border-radius: 4px; flex: none;`;
const VThumb = styled.div<{ $h: number }>`height: ${p => p.$h}px; border-radius: 4px; background: #555; border: 1px solid #3a3a3a;`;
const Swatch = styled.div`width: 21px; height: 23px; margin-left: 7px; background: #afbd2e; border: 1px solid #181818; flex: none;`;
const Stack = styled.div`width: 289px; height: 128px; margin: 4px 0 0 0; border: 2px solid #f2f2f6; display: flex; flex-direction: column; outline: 1px solid #60606a; outline-offset: -1px; flex: none;`;
const StackRow = styled.div`height: 21px; display: flex; align-items: center; border-bottom: 1px solid #7a7a7a;`;
const StackSel = styled.div`flex: 1; height: 19px; margin: 0 1px 0 7px; border: 1px solid ${blue}; display: flex; align-items: center; justify-content: space-between; padding: 0 5px 0 2px;`;
const White = styled.div`width: 14px; height: 14px; background: ${light};`;
const SubObj = styled.div`width: 28px; height: 26px; border-radius: 4px; background: ${blue}; display: flex; align-items: center; justify-content: center; margin-left: 8px; flex: none;`;
const Splitter = styled.div`height: 1px; margin: 20px 8px 8px 6px; background: #6a6a6a; display: flex; justify-content: center; align-items: center; flex: none;`;
const SplitDots = styled.div`flex: none; background: #444; padding: 0 4px;`;
const Mini = styled.div<{ $ml?: number }>`
  flex: none; width: 19px; height: 21px; margin-left: ${p => p.$ml ?? 1}px; border: 1px solid #484848; border-radius: 4px; background: #626262; display: flex; align-items: center; justify-content: center;
`;
const MiniBtn = ({ ml }: { ml?: number }) => <Mini $ml={ml}><Svg width="10" height="10" viewBox="0 0 10 10"><path d="M0 0H10V10H0ZM1 3V9H9V3Z" fill="#000" fillRule="evenodd" /></Svg></Mini>;
const SGrid = styled.div`display: grid; grid-template-columns: repeat(8, 21px); gap: 3px; margin: 7px 0 0 39px;`;
const MiniSep = ({ ml }: { ml: number }) => <Svg $ml={ml} width="2" height="16" viewBox="0 0 2 16"><path d="M0 0H2V16H0Z" fill="#222" /></Svg>;

const CommandPanel = () => (
  <Panel>
    <Grip $w={584} $h={6} $ml={1} />
    <PanelTabs>
      <PanelTab><Svg width="20" height="20" viewBox="0 0 20 20"><path d="M8.500 0.500H11.500V8.500H19.500V11.500H11.500V19.500H8.500V11.500H0.500V8.500H8.500Z" fill="#a3a3a3" /></Svg></PanelTab>
      <PanelTab $on><Svg width="22" height="22" viewBox="0 0 22 22" fill="none"><path d="M2 2H20V20H2Z" stroke={teal} strokeWidth="2" /><path d="M5 18C6 11 10 6 17 5" stroke={light} strokeWidth="2" /><path d="M0.500 0.500H4V4H0.500ZM18 0.500H21.500V4H18ZM0.500 18H4V21.500H0.500ZM18 18H21.500V21.500H18Z" fill="#333" stroke={teal} strokeWidth="1.200" /></Svg></PanelTab>
      <PanelTab><Svg width="20" height="22" viewBox="0 0 20 22"><path d="M2.500 0H17.500V8H2.500Z" fill="#a3a3a3" /><path d="M10 9V12M3 16V12.500H17V16" stroke="#3f8a8a" fill="none" strokeWidth="1.300" /><path d="M0 16H5.500V21H0ZM14 16H19.500V21H14Z" fill="#3f8a8a" /></Svg></PanelTab>
      <PanelTab><Svg width="24" height="20" viewBox="0 0 24 20" fill="none"><circle cx="15.500" cy="10" r="8.500" fill="#a3a3a3" /><path d="M9 1.500A10 10 0 0 0 9 18.500M6 1.500A10 10 0 0 0 6 18.500M12 1A10 10 0 0 0 12 19" stroke="#3f8a8a" /></Svg></PanelTab>
      <PanelTab><Svg width="20" height="20" viewBox="0 0 20 20"><path d="M0.500 1H19.500V13H0.500ZM8 15H12V17H15V19H5V17H8Z" fill="#a3a3a3" /></Svg></PanelTab>
      <PanelTab><Svg width="20" height="20" viewBox="0 0 20 20"><path d="M1 5L4 7L6.500 4.500L4.500 1C8 0 10.500 3 9 6.500L19 16.500Q19.500 19 17 19L7 9C3 10 0 8 1 5Z" fill="#a3a3a3" /></Svg></PanelTab>
    </PanelTabs>
    <Columns>
      <ColLeft>
        <Line $h={24} $mt={8}>
          <Field $w={259} $h={24}><Text $ls={0.1} $c="#d4d4d4">Plane003</Text></Field><Swatch />
        </Line>
        <Line $h={24} $mt={12}><Drop $w={289} $h={24} $off $pr={9}><Text $ml={-4} $c="#d4d4d4">Modifier List</Text><Down /></Drop></Line>
        <Stack>
          <StackRow><Svg $ml={5} width="20" height="11" viewBox="0 0 18 11"><path d="M0 5.500Q9 -5 18 5.500Q9 16 0 5.500Z" fill="#333" /></Svg><Text $ml={25} $ls={0.2} $c="#fff">TurboSmooth</Text></StackRow>
          <StackRow><Svg $ml={9} width="7" height="9" viewBox="0 0 7 9"><path d="M0 0L7 4.500L0 9Z" fill={light} /></Svg><StackSel><Text $c="#fff">Editable Poly</Text><White /></StackSel></StackRow>
        </Stack>
        <Line $h={24} $mt={8} $pl={5}>
          <Svg width="20" height="22" viewBox="0 0 20 22"><path d="M14 1L20 7L18 8.500L16 8L13 12L13.500 14L12 15.500L8.500 12.500L1 20.500L0 20L7 11.500L4.500 8.500L6 7.500L8 8L13 4Z" fill={light} /></Svg>
          <MiniSep ml={10} />
          <Svg $ml={15} width="10" height="24" viewBox="0 0 10 24"><path d="M0 1H10M1.500 1V20Q2 23 5 23Q8 23 8.500 20V1" fill="#333" stroke="#bbb" strokeWidth="1.300" /><path d="M3 12H7V20Q5 22 3 20Z" fill={teal} /></Svg>
          <MiniSep ml={16} />
          <Svg $ml={8} width="24" height="24" viewBox="0 0 24 24" fill="#555" stroke="#2d2d2d" strokeWidth="1.300"><path d="M11 4H20V11H23L19 16L14 11H17V7H11Z" /><circle cx="6" cy="6" r="5.500" /><circle cx="12" cy="17" r="5.500" fill="#444" /><circle cx="18" cy="17" r="5.500" fill="#444" /></Svg>
          <Svg $ml={8} width="18" height="23" viewBox="0 0 18 23" fill="#636363" stroke="#2d2d2d"><path d="M5 2V0.500H13V2M0 2.500H18V5H0ZM1.500 7H16.500V22H1.500Z" /><path d="M5 9V20M9 9V20M13 9V20" strokeWidth="2" /></Svg>
          <MiniSep ml={11} />
          <Svg $ml={9} width="23" height="24" viewBox="0 0 23 24"><path d="M0 2H18V24H0Z" fill={light} /><path d="M2 5H16M2.500 9H8V14H2.500ZM10.500 9H16V14H10.500ZM2.500 17H8V22H2.500ZM10.500 17H16V22H10.500Z" fill="none" stroke="#333" strokeWidth="1.300" /><path d="M10 13L22 1" stroke={orange} strokeWidth="4" /><path d="M9 15L11.500 13.500L10 12Z" fill="#333" /></Svg>
        </Line>
        <Splitter><SplitDots><DotGrid w={13} rows={2} c="#ddd" /></SplitDots></Splitter>
        <Line $h={438} $top>
          <LeftRolls />
          <VBar $mt={0} $h={438} $ml={3}><VThumb $h={397} /></VBar>
        </Line>
      </ColLeft>
      <RightRolls />
      <VBar $mt={4} $h={697} $ml={5}><VThumb $h={300} /></VBar>
    </Columns>
  </Panel>
);

const ScrollCol = styled.div`width: 278px; height: 438px; overflow: hidden; display: flex; flex-direction: column; flex: none;`;
const LeftRolls = () => (
  <ScrollCol>
    <Rollup $h={293}>
      <Head t="Selection" open />
      <Line $h={28} $mt={5} $pl={58}>
        <Svg width="20" height="20" viewBox="0 0 20 20" fill={teal} stroke="#2c5e5e" strokeWidth=".8"><circle cx="3" cy="10" r="2.200" /><circle cx="17" cy="3" r="2.400" /><circle cx="14" cy="17" r="2.400" /></Svg>
        <Svg $ml={11} width="19" height="20" viewBox="0 0 19 20"><path d="M17.500 1.500V18L1.500 10.500Z" fill="none" stroke="#2c5e5e" strokeWidth="2.600" /><path d="M17.500 1.500V18L1.500 10.500Z" fill="none" stroke={teal} strokeWidth="1.300" /></Svg>
        <Svg $ml={12} width="16" height="20" viewBox="0 0 16 20"><path d="M2 1H6C18 1 18 19 6 19H2V14C8 13 8 7 2 5Z" fill="none" stroke="#2c5e5e" strokeWidth="2.800" /><path d="M2 1H6C18 1 18 19 6 19H2V14C8 13 8 7 2 5Z" fill="none" stroke={teal} strokeWidth="1.500" /></Svg>
        <SubObj><Svg width="15" height="16" viewBox="0 0 15 16"><path d="M0 0H15V16H0Z" fill={teal} stroke="#2c4a6a" /></Svg></SubObj>
        <Svg $ml={6} width="20" height="19" viewBox="0 0 20 19"><path d="M10 0L19 5L10 9.500L1 5ZM0 6.500L9.300 11V19L0 14.500ZM20 6.500L10.700 11V19L20 14.500Z" fill={teal} /></Svg>
      </Line>
      <Line $h={16} $mt={8} $pl={41}><Check /><Text $ml={3}>By Vertex</Text></Line>
      <Line $h={16} $mt={8} $pl={41}><Check /><Text $ml={3}>Ignore Backfacing</Text></Line>
      <Line $h={20} $mt={6} $pl={41}><Check /><Text $ml={3}>By Angle:</Text><Field $ml={17} $w={107} $off>45,0<Spin c="#9a9a9a" /></Field></Line>
      <Line $h={21} $mt={5} $pl={40}><Button $w={95}>Shrink</Button><Button $w={95} $ml={9}>Grow</Button></Line>
      <Line $h={21} $mt={5} $pl={40}><Button $w={75} $off>Ring</Button><Field $ml={4} $w={15} $off><Spin c="#9a9a9a" /></Field><Button $w={77} $ml={10} $off>Loop</Button><Field $ml={3} $w={15} $off><Spin c="#9a9a9a" /></Field></Line>
      <GroupBox $ml={29} $mt={12} $w={212} $h={41}><Legend>Preview Selection</Legend>
        <Line $h={18} $mt={14} $pl={1}><RadioDot $on /><Text $ml={8} $w={43}>Off</Text><RadioDot /><Text $ml={8} $w={59}>SubObj</Text><RadioDot /><Text $ml={8}>Multi</Text></Line>
      </GroupBox>
      <Line $h={16} $mt={9} $pl={117}><Text>0 Polygons Selected</Text></Line>
    </Rollup>
    <Rollup $h={23}><Head t="Soft Selection" /></Rollup>
    <Rollup $h={160}>
      <Head t="Polygon: Material IDs" open />
      <Line $h={20} $mt={13} $pl={87}><Text $w={50}>Set ID:</Text><Field $w={93}><span /><Spin /></Field></Line>
      <Line $h={21} $mt={11} $pl={41}><Button $w={91}>Select ID</Button><Field $w={93} $ml={5}><span /><Spin /></Field></Line>
      <Line $h={24} $mt={7} $pl={39}><Drop $w={194} $h={24} $off $pr={9}><span /><Down c="#999" /></Drop></Line>
    </Rollup>
  </ScrollCol>
);

const two = (a: string, b: string, w = 95) => <><Button $w={w}>{a}</Button><Button $w={w} $ml={7}>{b}</Button></>;
const RightRolls = () => (
  <ColRight>
    <Rollup $h={23}><Head t="Subdivision Displacement" up ls={-0.08} /></Rollup>
    <Rollup $h={23}><Head t="Paint Deformation" up ls={-0.02} /></Rollup>
    <Rollup $h={189}>
      <Head t="Polygon: Smoothing Groups" open up />
      <SGrid>{Array.from({ length: 32 }, (_, i) => <Button key={i} $w={21}>{i + 1}</Button>)}</SGrid>
      <Line $h={21} $mt={7} $pl={39}><Button $w={91}>Select By SG</Button><Button $w={91} $ml={9}>Clear All</Button></Line>
      <Line $h={21} $mt={5} $pl={39}><Button $w={91}>Auto Smooth</Button><Field $w={87} $ml={9}>45,0<Spin /></Field></Line>
    </Rollup>
    <Rollup $h={460}>
      <Head t="Edit Geometry" open up />
      <Line $h={21} $mt={6} $pl={37}><Button $w={197}>Repeat Last</Button></Line>
      <GroupBox $ml={35} $mt={8} $w={202} $h={61}><Legend>Constraints</Legend>
        <Line $h={18} $mt={13} $pl={11}><RadioDot $on /><Text $ml={8} $w={57}>None</Text><RadioDot /><Text $ml={8}>Edge</Text></Line>
        <Line $h={18} $mt={4} $pl={11}><RadioDot /><Text $ml={8} $w={57}>Face</Text><RadioDot /><Text $ml={8}>Normal</Text></Line>
      </GroupBox>
      <Line $h={21} $mt={9} $pl={51}><Check /><Text $ml={3} $w={105}>Preserve UVs</Text><MiniBtn ml={0} /></Line>
      <Line $h={21} $mt={7} $pl={37}>{two("Create", "Collapse")}</Line>
      <Line $h={21} $mt={7} $pl={37}><Button $w={75}>Attach</Button><MiniBtn /><Button $w={95} $ml={7}>Detach</Button></Line>
      <GroupBox $ml={35} $mt={5} $w={202} $h={91}>
        <Line $h={21} $mt={7} $pl={5}><Button $w={91}>Slice Plane</Button><Check $ml={7} /><Text $ml={3}>Split</Text></Line>
        <Line $h={21} $mt={7} $pl={5}><Button $w={91} $off>Slice</Button><Button $w={91} $ml={7} $off>Reset Plane</Button></Line>
        <Line $h={21} $mt={7} $pl={5}>{two("QuickSlice", "Cut", 91)}</Line>
      </GroupBox>
      <Line $h={21} $mt={7} $pl={37}><Button $w={75}>MSmooth</Button><MiniBtn /><Button $w={75} $ml={7}>Tessellate</Button><MiniBtn /></Line>
      <Line $h={21} $mt={7} $pl={37}><Button $w={113}>Make Planar</Button><Button $w={21} $ml={7}>X</Button><Button $w={21} $ml={7}>Y</Button><Button $w={21} $ml={7}>Z</Button></Line>
      <Line $h={21} $mt={7} $pl={37}>{two("View Align", "Grid Align")}</Line>
      <Line $h={21} $mt={7} $pl={87}><Button $w={75}>Relax</Button><MiniBtn /></Line>
      <Line $h={21} $mt={7} $pl={37}>{two("Hide Selected", "Unhide All")}</Line>
      <Line $h={21} $mt={7} $pl={77}><Button $w={118} /></Line>
    </Rollup>
  </ColRight>
);

/* ---------- time line & status ---------- */
const Timeline = styled.div`height: 57px; flex: none; display: flex; padding-left: 3px;`;
const TimeBody = styled.div`flex: 1; margin-left: 5px; display: flex; flex-direction: column;`;
const TrackRow = styled.div`height: 31px; margin-top: 5px; display: flex; border-top: 1px solid #111;`;
const MiniCurve = styled.div`width: 63px; flex: none; padding: 8px 0 0 17px;`;
const Ruler = styled.div`width: 1784px; flex: none; height: 30px; background: #2a2a2a; position: relative;`;
const RulerLabel = styled.span`position: absolute; top: 15px; width: 30px; text-align: center; font-size: 12px; line-height: 15px; color: #bdbdbd;`;
const Cursor0 = styled.div`position: absolute; left: 1px; top: 2px; width: 10px; height: 28px; background: #857d1f; border: 1px solid #938b2a;`;

const Status = styled.div`height: 68px; flex: none; display: flex; padding-left: 4px;`;
const Script = styled.div`width: 123px; flex: none; display: flex; flex-direction: column; gap: 1px; padding-top: 5px;`;
const ScriptBox = styled.div<{ $bg: string }>`height: 28px; border: 2px solid #777; border-right-color: #eee; border-bottom-color: #eee; background: ${p => p.$bg}; font: 13.5px "Liberation Mono", monospace; letter-spacing: 1.05px; color: #777; padding: 2px 0 0 3px; overflow: hidden; white-space: pre;`;
const VLine = styled.div`width: 2px; height: 62px; margin: 3px 0 0 4px; background: #1f1f1f; flex: none;`;
const Col = styled.div<{ $ml: number; $w: number; $pt?: number }>`flex: none; margin-left: ${p => p.$ml}px; width: ${p => p.$w}px; padding-top: ${p => p.$pt ?? 7}px; display: flex; flex-direction: column;`;
const TagBtn = styled.div`width: 26px; height: 26px; border-radius: 3px; background: ${blue}; border: 1px solid #3a5c8c; display: flex; align-items: center; justify-content: center; flex: none;`;
const BigKey = styled.div`width: 53px; height: 55px; margin: 7px 0 0 17px; border-radius: 4px; background: #626262; border: 1px solid #3a3a3a; display: flex; align-items: center; justify-content: center; flex: none;`;
const NavGrid = styled.div`display: grid; grid-template-columns: repeat(4, 28.3px); grid-template-rows: 27px 27px; margin: 9px 0 0 14px;`;
const NavCell = styled.div`position: relative; width: 20px; height: 20px;`;
const I20 = ({ children }: { children: React.ReactNode }) => <Svg width="20" height="20" viewBox="0 0 20 20" fill="none">{children}</Svg>;
const NavFly = styled(Flyout)`right: -2px; bottom: -3px;`;

const StatusBar = () => (
  <Status>
    <Script><ScriptBox $bg="#dcc4c4" /><ScriptBox $bg="#fff">MAXScript Mini</ScriptBox></Script>
    <VLine />
    <Col $ml={4} $w={679} $pt={6}><Line $h={28}><Text $ls={0.1} $c="#f0f0f0">1 Object Selected</Text></Line></Col>
    <Col $ml={0} $w={530} $pt={6}>
      <Line $h={28}>
        <Svg width="18" height="20" viewBox="0 0 18 20"><path d="M4 1H1V4M14 1H17V4M1 16V19H4M17 16V19H14" fill="none" stroke={light} strokeWidth="1.400" /><path d="M5 6H13V14H5Z" fill={teal} /></Svg>
        <Svg $ml={18} width="12" height="18" viewBox="0 0 12 18"><path d="M2.500 8V4.500C2.500 0 9.500 0 9.500 4.500V8" fill="none" stroke={light} strokeWidth="2" /><path d="M0 8H12V18H0ZM5 11V15H7V11Z" fill={light} fillRule="evenodd" /></Svg>
        <Svg $ml={19} width="16" height="17" viewBox="0 0 16 17"><path d="M0 0H16V17H0Z" fill={light} /><circle cx="8" cy="8.500" r="4" fill="none" stroke="#333" strokeWidth="1.500" /><path d="M8 0V5M8 12V17M0 8.500H4M12 8.500H16" stroke="#333" strokeWidth="1.400" /><path d="M1.500 1.500H5M1.500 1.500V5M11 1.500H14.500V5M1.500 12V15.500H5M14.500 12V15.500H11" stroke="#333" fill="none" /><circle cx="8" cy="8.500" r="1.200" fill="#333" /></Svg>
        <Text $ml={11} $w={18}>X:</Text><Field $w={71} $h={22} $off>24,833</Field>
        <Text $ml={17} $w={14}>Y:</Text><Field $w={71} $h={22} $off>-0,0</Field>
        <Text $ml={17} $w={16}>Z:</Text><Field $w={71} $h={22} $off>29,078</Field>
        <Text $ml={17}>Grid = 10,0</Text>
      </Line>
      <Line $h={28} $mt={3} $pl={377}><TagBtn><Svg width="15" height="16" viewBox="0 0 15 16"><path d="M7.500 1L14 4.500V11.500L7.500 15L1 11.500V4.500ZM1 4.500L7.500 8L14 4.500M7.500 8V15M4.500 3L11 6.500V13M11 3L4 6.500V13" fill="none" stroke="#2b3c55" strokeWidth="2" /><path d="M7.500 1L14 4.500V11.500L7.500 15L1 11.500V4.500ZM1 4.500L7.500 8L14 4.500M7.500 8V15" fill="none" stroke={light} strokeWidth=".9" /></Svg></TagBtn><Text $ml={6} $ls={0.3}>Add Time Tag</Text></Line>
    </Col>
    <Col $ml={15} $w={140}>
      <Line $h={24}>
        <Svg width="19" height="14" viewBox="0 0 19 14"><path d="M0 0H2V14H0ZM10 1V13L3.500 7ZM18 1V13L11.500 7Z" fill={light} /></Svg>
        <Svg $ml={12} width="19" height="14" viewBox="0 0 19 14"><path d="M9 1V13L0 7ZM11 1H13.500V13H11ZM15.500 1H18V13H15.500Z" fill={light} /></Svg>
        <Svg $ml={11} width="14" height="16" viewBox="0 0 14 16"><path d="M0 0L14 8L0 16Z" fill={light} /><path d="M19 14V19H14Z" fill={light} /></Svg>
        <Svg $ml={12} width="18" height="14" viewBox="0 0 18 14"><path d="M9.500 1V13L18 7ZM0 1H2.500V13H0ZM4.500 1H7V13H4.500Z" fill={light} /></Svg>
        <Svg $ml={13} width="18" height="14" viewBox="0 0 18 14"><path d="M16 0H18V14H16ZM1 1V13L7.500 7ZM9 1V13L15.500 7Z" fill={light} /></Svg>
      </Line>
      <Line $h={24} $mt={3} $pl={2}>
        <Svg width="15" height="10" viewBox="0 0 15 10"><path d="M6 0V10L0 5ZM9 0V10L15 5Z" fill={light} /></Svg>
        <Field $w={89} $h={21} $ml={8}>0<Spin /></Field>
        <Svg $ml={6} width="20" height="19" viewBox="0 0 20 19"><circle cx="7" cy="7" r="7" fill={light} /><path d="M7 2V7H11" fill="none" stroke="#333" strokeWidth="1.600" /><circle cx="13.500" cy="13" r="4" fill="#444" stroke={orange} strokeWidth="2.500" /><circle cx="13.500" cy="13" r="5.500" fill="none" stroke={orange} strokeWidth="1.200" strokeDasharray="2 2.200" /></Svg>
      </Line>
    </Col>
    <BigKey><Svg width="32" height="34" viewBox="0 0 32 34"><path d="M13 0H19V13H32V19H19V32H13V19H0V13H13Z" fill={light} /><path d="M20 27L32 15M28 19L31 22" stroke="#2d6f70" strokeWidth="4" /><circle cx="19" cy="29" r="4" fill="none" stroke={teal} strokeWidth="2.500" /><path d="M21 27L32 16M28 19L31 22" stroke={teal} strokeWidth="2.200" /></Svg></BigKey>
    <Col $ml={6} $w={57}><Button $w={57} $h={25}>Auto</Button><Line $h={3} /><Button $w={57} $h={25}>Set K.</Button></Col>
    <Col $ml={6} $w={144}>
      <Drop $w={143} $h={23}>Selected<Down /></Drop>
      <Line $h={24} $mt={5}>
        <Svg $ml={3} width="20" height="20" viewBox="0 0 20 20" fill="none"><path d="M1 19C6 19 6 8 7 3M19 19C14 19 14 8 13 3" stroke={teal} strokeWidth="2" /><path d="M1 3H19" stroke={light} /><circle cx="1.500" cy="3" r="1.500" fill={light} /><circle cx="18.500" cy="3" r="1.500" fill={light} /><path d="M8 1H12V5H8Z" stroke={light} /><path d="M24 18V23H19Z" fill={light} /></Svg>
        <Button $ml={7} $w={111} $h={26}>Filters...</Button>
      </Line>
    </Col>
    <NavGrid>
      <NavCell><I20><circle cx="12" cy="7" r="5.500" stroke={light} strokeWidth="2" /><path d="M8 11L1 18" stroke={light} strokeWidth="3" /></I20></NavCell>
      <NavCell><I20><path d="M8 0H18V11H8Z" fill={teal} /><path d="M13 0V11M8 5.500H18" stroke="#333" /><circle cx="8" cy="10" r="4.500" fill="#444" stroke={light} strokeWidth="1.800" /><path d="M5 13L1 18" stroke={light} strokeWidth="2.500" /></I20></NavCell>
      <NavCell><I20><path d="M10 3L17 6.500V13L10 17L3 13V6.500Z" fill={teal} /><path d="M3 6.500L10 10L17 6.500M10 10V17" stroke="#2d6f70" /><path d="M4 0.500H1V4M16 0.500H19V4M1 15V18.500H4M19 15V18.500H16" stroke={light} /></I20><NavFly /></NavCell>
      <NavCell><I20><path d="M15 1L19 4V12L14 14L10 11V4Z" fill={teal} stroke="#2d6f70" strokeWidth=".7" /><path d="M5 6L9 9L5 12L1 9ZM5 13L9 16L5 19L1 16ZM11 12L14 15L11 18L8 15Z" fill={light} /></I20><NavFly /></NavCell>
      <NavCell><I20><path d="M1 1H18V17H12M1 1V14" stroke={light} strokeDasharray="3 2" strokeWidth="1.500" /><circle cx="10" cy="9" r="4.500" stroke={teal} strokeWidth="2" /><path d="M7 12L1 19" stroke={teal} strokeWidth="2.500" /></I20></NavCell>
      <NavCell><I20><path d="M6 20L1 12Q1 9 3 11L5 13V4Q6 2 7.500 4V9L8 2Q9.500 0 10.500 2V9L12 3Q13.500 2 14 4L13.500 10L16 6Q18 6 17 8L15 16L14 20Z" fill={light} /></I20><NavFly /></NavCell>
      <NavCell><I20><circle cx="8" cy="9" r="7" fill={light} /><path d="M8 2V9H1A7 7 0 0 1 8 2Z" fill={teal} /><ellipse cx="11" cy="10" rx="10" ry="3.500" transform="rotate(-50 11 10)" stroke="#444" strokeWidth="3" /><ellipse cx="11" cy="10" rx="10" ry="3.500" transform="rotate(-50 11 10)" stroke="#ccc" strokeWidth="1.500" /></I20><NavFly /></NavCell>
      <NavCell><I20><path d="M2 2H17V18H2Z" fill={light} /><path d="M9 4H15V10L13 8L9.500 11.500L8 10L11 6.500ZM4 17V12H9V17Z" fill="#333" /></I20></NavCell>
    </NavGrid>
  </Status>
);

/* ---------- taskbar ---------- */
const TaskBar = styled.div`height: 50px; flex: none; display: flex; align-items: center; background: linear-gradient(90deg, #0a0410, #120612 25%, #0a020e 45%, #090103 60%, #140202 78%, #120101);`;
const Search = styled.div`width: 430px; height: 50px; background: #f1f1f1; border-top: 1px solid #b8b8b8; margin-left: 20px; display: flex; align-items: center; padding: 0 19px 0 11px; flex: none;`;
const TaskApp = styled.div<{ $w: number; $ml: number; $on?: boolean }>`
  flex: none; width: ${p => p.$w}px; height: 50px; margin-left: ${p => p.$ml}px; border-bottom: 3px solid #76b9ed; display: flex; align-items: center; justify-content: center; padding-top: 2px;
  background: ${p => (p.$on ? "#423a44" : "transparent")};
`;
const Tray = styled.div`margin-left: auto; display: flex; align-items: center; height: 50px; padding-right: 5px;`;
const Clock = styled.div`width: 90px; margin-left: 6px; text-align: center; font: 14px/22px ${segoe}; color: #f2f2f2; letter-spacing: 0; white-space: pre;`;

const Task = () => (
  <TaskBar>
    <Svg $ml={20} width="20" height="20" viewBox="0 0 20 20"><path d="M0 3L8.500 1.700V9.500H0ZM9.500 1.500L20 0V9.500H9.500ZM0 10.500H8.500V18.300L0 17ZM9.500 10.500H20V20L9.500 18.500Z" fill="#fff" /></Svg>
    <Search>
      <Svg width="27" height="27" viewBox="0 0 27 27"><circle cx="13.500" cy="13.500" r="11.500" fill="none" stroke="#000" strokeWidth="3.500" /></Svg>
      <Text $segoe $ml={12} $fs={17.3} $ls={-0.22} $c="#3c3c3c">Scrivi qui per eseguire la ricerca</Text>
      <Spacer />
      <Svg width="14" height="21" viewBox="0 0 14 21" fill="none" stroke="#333" strokeWidth="1.500"><rect x="4" y="0.800" width="6" height="12" rx="2.500" /><path d="M1 8V12Q1 16 7 16Q13 16 13 12V8M7 16V20M3.500 20H10.500" /></Svg>
    </Search>
    <Svg $ml={18} width="24" height="18" viewBox="0 0 24 18" fill="none" stroke="#fff" strokeWidth="1.300"><path d="M4.500 0.700H19.500V17.300H4.500ZM3 2.500H0.700V15.500H3M21 2.500H23.300V15.500H21" /></Svg>
    <TaskApp $w={51} $ml={26}><Svg width="28" height="28" viewBox="0 0 28 28"><circle cx="14" cy="14" r="14" fill="#f7c62f" /><path d="M14 14L1.900 7A14 14 0 0 0 14 28L20 17.500Z" fill="#2e9a4e" /><path d="M14 7H26.100A14 14 0 0 0 1.900 7L8 17.500Z" fill="#df4233" /><circle cx="14" cy="14" r="6.300" fill="#fff" /><circle cx="14" cy="14" r="5" fill="#4a80ee" /></Svg></TaskApp>
    <TaskApp $w={61} $ml={6} $on><Badge $s={30} $f={26}>3<BadgeTag $f={7}>MAX</BadgeTag></Badge></TaskApp>
    <TaskApp $w={51} $ml={6}><Svg width="28" height="28" viewBox="0 0 28 28"><circle cx="14" cy="14" r="13.500" fill="#6d3a94" stroke="#a48bb8" /><path d="M11 26V22C7 22 8 19 5.500 18.500C8 17.500 9 20 11 19.500C6 18 5 12 8 9.500C7.500 8 7.500 6 8 5L12 7H16L20 5C20.500 6 20.500 8 20 9.500C23 12 22 18 17 19.500V26Z" fill="#fff" /></Svg></TaskApp>
    <TaskApp $w={51} $ml={11}><Svg width="26" height="26" viewBox="0 0 26 26"><path d="M0 0H26V26H0Z" fill="#fff" /><path d="M1.500 1.500H24.500V22L20 16L17 19L10 7L4 18L1.500 21Z" fill="#0c0810" /></Svg></TaskApp>
    <Tray>
      <Svg width="18" height="20" viewBox="0 0 18 20" fill="none" stroke="#fff" strokeWidth="1.400"><circle cx="12.500" cy="4" r="3" /><path d="M8 12Q8 8 12.500 8Q17 8 17 12" /><circle cx="5.500" cy="10.500" r="3" /><path d="M1 19Q1 14.500 5.500 14.500Q10 14.500 10 19" /></Svg>
      <Svg $ml={28} width="16" height="9" viewBox="0 0 16 9"><path d="M1 8L8 1L15 8" fill="none" stroke="#fff" strokeWidth="1.400" /></Svg>
      <Svg $ml={13} width="19" height="11" viewBox="0 0 19 11"><path d="M1 1H16.500V10H1ZM17 4H18.500V7H17" fill="none" stroke="#fff" strokeWidth="1.300" /><path d="M3 3H8V8H3Z" fill="#fff" /></Svg>
      <Svg $ml={12} width="17" height="15" viewBox="0 0 17 15"><path d="M4.500 0L8.500 2.800L4.500 5.500L0.500 2.800ZM12.500 0L16.500 2.800L12.500 5.500L8.500 2.800ZM4.500 5.500L8.500 8.200L4.500 11L0.500 8.200ZM12.500 5.500L16.500 8.200L12.500 11L8.500 8.200ZM8.500 9.500L12 12L8.500 14.500L5 12Z" fill="#fff" /></Svg>
      <Svg $ml={11} width="20" height="16" viewBox="0 0 20 16" fill="none" stroke="#fff" strokeWidth="1.200"><path d="M1 5H4L8 1V15L4 11H1ZM11 5.500Q12.500 8 11 10.500M13.500 3.500Q16 8 13.500 12.500" /><path d="M16 1.500Q20 8 16 14.500" stroke="#777" /></Svg>
      <Clock>19:51<br />29/12/2017</Clock>
      <Svg $ml={17} width="20" height="20" viewBox="0 0 20 20"><path d="M1 1H19V15.500H13L10 19L7 15.500H1Z" fill="none" stroke="#fff" strokeWidth="1.400" /></Svg>
      <Svg $ml={25} width="1" height="50" viewBox="0 0 1 50"><path d="M0 0H1V50H0Z" fill="#5d5256" /></Svg>
    </Tray>
  </TaskBar>
);

const Doc = ({ kind }: { kind: number }) => (
  <Svg width="15" height="17" viewBox="0 0 15 17"><rect x=".7" y=".7" width="13.600" height="15.600" fill={kind === 2 ? "#333" : light} stroke={kind === 2 ? light : "none"} strokeWidth="1.300" />
    {kind !== 1 && <path d="M4 4.500H12M4 6.500H9M4 8.500H12M4 10.500H10" stroke={kind === 2 ? light : "#333"} />}</Svg>
);

const RULER_STEP = 17.715;
const tickX = (i: number) => Math.round(6 + i * RULER_STEP) + 0.5;

export default function App() {
  return (
    <Window>
      <Global />
      <TitleBar>
        <Badge $s={20} $f={17}>3<BadgeTag $f={5}>MAX</BadgeTag></Badge>
        <Text $segoe $ml={4} $fs={14.2} $c="#111" $ls={0}>877953_LAVABO.max - Autodesk 3ds Max 2018 - Student Version</Text>
        <TitleBarEnd>
          <Svg width="12" height="2" viewBox="0 0 12 2"><path d="M0 0.500H12" stroke="#000" /></Svg>
          <Svg $ml={46} width="13" height="12" viewBox="0 0 13 12"><path d="M0.500 2.500H9.500V11.500H0.500ZM2.500 2V0.500H12.500V9.500H10" fill="none" stroke="#000" /></Svg>
          <Svg $ml={47} width="12" height="12" viewBox="0 0 12 12"><path d="M0.500 0.500L11.500 11.500M11.500 0.500L0.500 11.500" stroke="#000" strokeWidth="1.100" /></Svg>
        </TitleBarEnd>
      </TitleBar>
      <MenuBar>
        {menu.map(([a, u, b, w]) => <MenuItem key={a + u + b} $w={w}>{a}<u>{u}</u>{b}</MenuItem>)}
        <Spacer />
        <SignIn>
          <Svg width="17" height="17" viewBox="0 0 17 17"><path d="M5 1Q8.500 -1.500 12 1V7L11 9V11L16 13V16H1V13L6 11V9L5 7Z" fill="#f2f4f8" stroke="#555c6c" /></Svg>
          <Text $ml={5} $fs={12.5} $c="#222">Sign In</Text><Spacer /><Down c="#000" s={10} />
        </SignIn>
        <Text $ml={24} $w={79} $ls={0.2} $c="#d8d8d8">Workspaces:</Text>
        <Drop $w={166} $h={25} $pr={11}>Default<Down /></Drop>
      </MenuBar>
      <MainTools />
      <Ribbon>
        <Grip $w={3} $h={45} />
        <RibbonBody>
          <TabStrip>
            <RibbonTab $w={102} $pl={26} $on>Modeling</RibbonTab>
            <RibbonTab $w={116} $pl={29}>Freeform</RibbonTab>
            <RibbonTab $w={118} $pl={29}>Selection</RibbonTab>
            <RibbonTab $w={136} $pl={29}>Object Paint</RibbonTab>
            <RibbonTab $w={127} $pl={29}>Populate</RibbonTab>
            <Svg width="28" height="9" viewBox="0 0 28 9"><rect width="17" height="9" rx="2" fill="#e8e8e8" /><path d="M5 3H12L8.500 7Z" fill="#333" /><path d="M24 3.500H29L26.500 6.500Z" fill="#ccc" /></Svg>
          </TabStrip>
          <RibbonRow>{ribbonRow.map(([t, w]) => <RibbonBtn key={t} $w={w}>{t}</RibbonBtn>)}</RibbonRow>
        </RibbonBody>
      </Ribbon>
      <WorkGap />
      <Work>
        <LeftDock>
          <Grip $w={45} $h={6} $ml={2} />
          <Strip>
            <PlayTab><Svg width="7" height="11" viewBox="0 0 7 11"><path d="M0 0L7 5.500L0 11Z" fill="#e0e0e0" /></Svg></PlayTab>
            <LayoutTab $mt={12}><Cell /><Cell /></LayoutTab>
            <LayoutTab $mt={1} $on><Cell $on /></LayoutTab>
          </Strip>
        </LeftDock>
        <Explorer>
          <Grip $w={96} $h={6} $ml={2} />
          <Line $h={20} $mt={9} $pl={16}><Text $segoe $fs={14.4} $c="#fff">Select</Text></Line>
          <Line $h={8} $mt={7} $pl={88}><Chev /></Line>
          <ExpBody>
            <ExpIcons>
              {filterIcons.map((ic, i) => <ExpIcon key={i} $on><I19>{ic}</I19></ExpIcon>)}
              <ExpRule $mt={1} $mb={3} />
              <ExpIcon><Doc kind={0} /></ExpIcon><ExpIcon><Doc kind={1} /></ExpIcon><ExpIcon><Doc kind={2} /></ExpIcon>
              <ExpRule $mt={0} $mb={4} />
              <ExpIcon><Svg width="18" height="18" viewBox="0 0 18 18"><path d="M0 0H17L10 8V15L7 17V8Z" fill="#999" /><circle cx="13" cy="13" r="5.500" fill="#444" /><circle cx="13" cy="13" r="3.500" stroke="#999" strokeWidth="2.200" fill="none" /></Svg></ExpIcon>
              <ExpIcon><Svg $mt={-3} width="17" height="15" viewBox="0 0 17 15"><path d="M0 0H17L10 8V14H7.500V8Z" fill={light} /></Svg></ExpIcon>
              <ExpIcon><Svg width="18" height="16" viewBox="0 0 18 16"><path d="M0.700 15.300V3H3V0.700H7V3H11V0.700H15V3H17.300V15.300Z" fill="none" stroke={light} strokeWidth="1.300" /></Svg></ExpIcon>
            </ExpIcons>
            <ExpList>
              <ExpHead><Text $ls={-0.1} $c="#fff">Name (Sorted Ascending)</Text></ExpHead>
              {["#555", "#5f5f5f", "#858585"].map((bg, i) => (
                <ExpRow key={bg}>
                  <Svg width="19" height="22" viewBox="0 0 19 22"><path d={i < 2 ? (i ? "M9.500 0V22M9.500 11.500H17" : "M9.500 11V22M9.500 11.500H17") : "M9.500 0V11M9.500 11.500H17"} stroke="#777" strokeDasharray="1 1" fill="none" /></Svg>
                  <Eye w={17} /><Svg $ml={4} $mt={-1} width="14" height="14" viewBox="0 0 14 14"><circle cx="7" cy="7" r="7" fill={light} /></Svg>
                  <ExpName $bg={bg}>Plane</ExpName>
                </ExpRow>
              ))}
              <HScroll>
                <Svg width="7" height="9" viewBox="0 0 7 9"><path d="M6 0.500L1.500 4.500L6 8.500" stroke="#444" strokeWidth="2" fill="none" /></Svg>
                <Thumb />
                <Svg width="7" height="9" viewBox="0 0 7 9"><path d="M1 0.500L5.500 4.500L1 8.500" stroke="#444" strokeWidth="2" fill="none" /></Svg>
              </HScroll>
            </ExpList>
          </ExpBody>
          <Line $h={8} $mt={3} $pl={88}><Chev /></Line>
        </Explorer>
        <Viewport>
          <Scene />
          <VpLabel>[+] [Front ] [Standard ] [Edged Faces ]</VpLabel>
          <CubeText>FRONT</CubeText>
          <AxisLetter $x={24} $y={684} $c="#1010c0">z</AxisLetter>
          <AxisLetter $x={25} $y={709} $c="#128012">y</AxisLetter>
          <AxisLetter $x={49} $y={709} $c="#a01212">x</AxisLetter>
        </Viewport>
        <CommandPanel />
      </Work>
      <Timeline>
        <Grip $w={3} $h={55} />
        <TimeBody>
          <Line $h={21} $pl={1}><Button $w={18}>&lt;</Button><Button $w={154} $ml={2}>0 / 100</Button><Button $w={18} $ml={2}>&gt;</Button></Line>
          <TrackRow>
            <MiniCurve><Svg width="18" height="12" viewBox="0 0 18 12" fill="none"><path d="M1.500 0V12" stroke="#aaa" strokeWidth="3" strokeDasharray="1 2" /><path d="M6 8C8 -3 10 -2 12 6C13 13 15 12 17 5" stroke={teal} strokeWidth="1.300" /></Svg></MiniCurve>
            <Ruler>
              <Cursor0 />
              <Svg width="1784" height="30" viewBox="0 0 1784 30">
                {Array.from({ length: 101 }, (_, i) => <path key={i} d={`M${tickX(i)} 0V${i % 5 ? 14 : 30}`} stroke="#5e5e5e" />)}
              </Svg>
              {Array.from({ length: 21 }, (_, i) => <RulerLabel key={i} style={{ left: 5 + i * 5 * RULER_STEP - 15 }}>{i * 5}</RulerLabel>)}
            </Ruler>
          </TrackRow>
        </TimeBody>
      </Timeline>
      <StatusBar />
      <Task />
    </Window>
  );
}
